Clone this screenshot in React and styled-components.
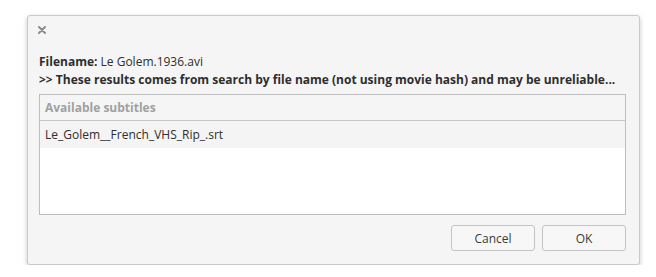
import React from "react";
import styled, { createGlobalStyle } from "styled-components";

const Global = createGlobalStyle`
  html, body { margin: 0; padding: 0; background: #ffffff; }
  body { font-family: "Open Sans", "Noto Sans", sans-serif; font-size: 12px; color: #2e2e2e; }
`;

const Page = styled.div`
  padding: 15px 16px 0 27px;
`;

const Dialog = styled.div`
  width: 613px;
  box-sizing: border-box;
  background: #f5f5f5;
  border: 1px solid #c9c9c9;
  border-radius: 3px;
  box-shadow: 0 2px 5px rgba(0, 0, 0, 0.22);
  padding: 0 13px 13px 11px;
  display: flex;
  flex-direction: column;
`;

const TitleBar = styled.div`
  height: 28px;
  display: flex;
  align-items: center;
`;

const CloseButton = styled.button`
  border: 0;
  background: none;
  padding: 0;
  margin-left: -2px;
  width: 10px;
  height: 10px;
  display: flex;
  align-items: center;
  justify-content: center;
  cursor: pointer;
`;

const Info = styled.div`
  margin-top: 9px;
  line-height: 18px;
`;

const Line = styled.div`
  font-weight: ${(p) => (p.$bold ? 700 : 400)};
  white-space: nowrap;
`;

const Label = styled.span`
  font-weight: 700;
`;

const List = styled.div`
  margin-top: 5px;
  height: 121px;
  box-sizing: border-box;
  border: 1px solid #bdbdbd;
  background: #ffffff;
  display: flex;
  flex-direction: column;
`;

const Header = styled.div`
  height: 25px;
  background: #f5f5f5;
  border-bottom: 1px solid #c6c6c6;
  display: flex;
  align-items: center;
  padding-left: 5px;
  font-weight: 700;
  color: #a0a0a0;
`;

const Row = styled.div`
  height: 27px;
  background: ${(p) => (p.$alt ? "#f4f4f4" : "#ffffff")};
  display: flex;
  align-items: center;
  padding-left: 5px;
  color: #2e2e2e;
`;

const Buttons = styled.div`
  margin-top: 10px;
  display: flex;
  justify-content: flex-end;
  gap: 7px;
`;

const Button = styled.button`
  width: 84px;
  height: 26px;
  box-sizing: border-box;
  border: 1px solid #c4c4c4;
  border-radius: 3px;
  background: #f7f7f7;
  font-family: "Open Sans", "Noto Sans", sans-serif;
  font-size: 12px;
  color: #3a3a3a;
  padding: 0;
`;

export default function App() {
  return (
    <>
      <Global />
      <Page>
        <Dialog>
          <TitleBar>
            <CloseButton aria-label="Close">
              <svg width="8" height="8" viewBox="0 0 8 8">
                <path d="M1 1 L7 7 M7 1 L1 7" stroke="#8a8a8a" strokeWidth="1.9" strokeLinecap="round" />
              </svg>
            </CloseButton>
          </TitleBar>
          <Info>
            <Line>
              <Label>Filename:</Label> Le Golem.1936.avi
            </Line>
            <Line $bold>
              &gt;&gt; These results comes from search by file name (not using movie hash) and may be unreliable...
            </Line>
          </Info>
          <List>
            <Header>Available subtitles</Header>
            <Row $alt>Le_Golem__French_VHS_Rip_.srt</Row>
          </List>
          <Buttons>
            <Button>Cancel</Button>
            <Button>OK</Button>
          </Buttons>
        </Dialog>
      </Page>
    </>
  );
}
